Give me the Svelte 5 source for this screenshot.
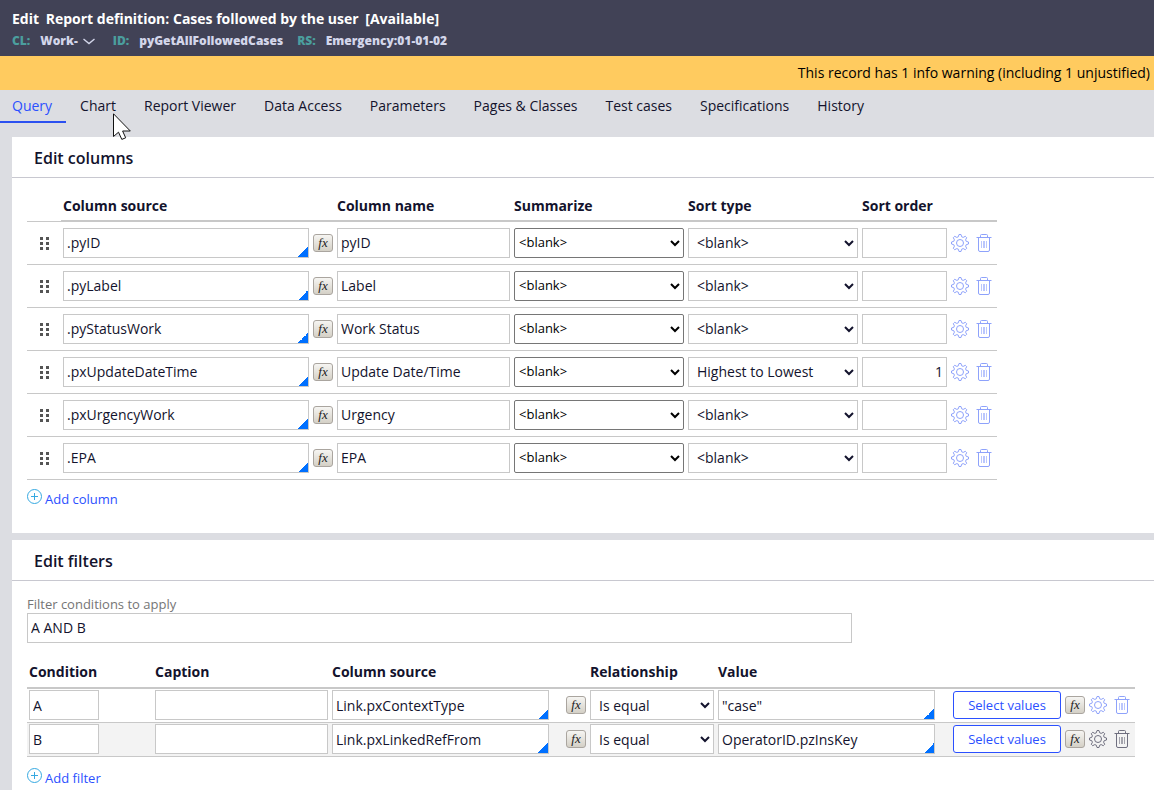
<script>
  const tabs = [
    "Query",
    "Chart",
    "Report Viewer",
    "Data Access",
    "Parameters",
    "Pages & Classes",
    "Test cases",
    "Specifications",
    "History",
  ];

  let activeTab = "Query";

  let columns = [
    { source: ".pyID", name: "pyID", summarize: "", sort: "", order: "" },
    { source: ".pyLabel", name: "Label", summarize: "", sort: "", order: "" },
    { source: ".pyStatusWork", name: "Work Status", summarize: "", sort: "", order: "" },
    { source: ".pxUpdateDateTime", name: "Update Date/Time", summarize: "", sort: "desc", order: "1" },
    { source: ".pxUrgencyWork", name: "Urgency", summarize: "", sort: "", order: "" },
    { source: ".EPA", name: "EPA", summarize: "", sort: "", order: "" },
  ];

  let logic = "A AND B";

  let filters = [
    { condition: "A", caption: "", source: "Link.pxContextType", relation: "eq", value: '"case"' },
    { condition: "B", caption: "", source: "Link.pxLinkedRefFrom", relation: "eq", value: "OperatorID.pzInsKey" },
  ];

  function addColumn() {
    columns = [...columns, { source: "", name: "", summarize: "", sort: "", order: "" }];
  }

  function removeColumn(i) {
    columns = columns.filter((_, n) => n !== i);
  }

  function addFilter() {
    const condition = String.fromCharCode(65 + filters.length);
    filters = [...filters, { condition, caption: "", source: "", relation: "eq", value: "" }];
  }

  function removeFilter(i) {
    filters = filters.filter((_, n) => n !== i);
  }
</script>

{#snippet gear()}
  <svg width="18" height="18" viewBox="0 0 18 18" fill="none" stroke="currentColor">
    <path
      d="M7.3 2.8 8 .5h2l.7 2.3 1.5.6 2.1-1.1 1.4 1.4-1.1 2.1.6 1.500 2.300.7v2l-2.300.7-.6 1.500 1.100 2.100-1.400 1.400-2.100-1.100-1.500.6-.7 2.300H8l-.7-2.300-1.500-.6-2.100 1.100-1.400-1.400 1.100-2.100-.6-1.500L.5 10V8l2.300-.7.6-1.500-1.100-2.100 1.400-1.400 2.100 1.100Z"
      stroke-linejoin="round"
    />
    <circle cx="9" cy="9" r="3.5" />
  </svg>
{/snippet}

{#snippet trash()}
  <svg width="16" height="18" viewBox="0 0 16 18" fill="none" stroke="currentColor">
    <path d="M.5 3.5h15M4.5 3V1.5q0-1 1-1h5q1 0 1 1V3" />
    <path d="M2.5 4v12q0 1.5 1.5 1.5h8q1.5 0 1.5-1.5V4" />
    <path d="M5.5 7v7M7.5 7v7M8.5 7v7M10.5 7v7" opacity="0.6" />
  </svg>
{/snippet}

{#snippet plus()}
  <svg width="15" height="15" viewBox="0 0 15 15" fill="none" stroke="#36a9e1">
    <circle cx="7.5" cy="7.5" r="7" />
    <path d="M7.5 4v7M4 7.5h7" />
  </svg>
{/snippet}

<header>
  <h1><span>Edit</span> <span>Report definition: Cases followed by the user</span> [Available]</h1>
  <div class="meta">
    <span class="key">CL:</span>
    <button type="button" class="class-menu">
      Work-
      <svg width="12" height="7" viewBox="0 0 12 7" fill="none" stroke="currentColor" stroke-width="1.4">
        <path d="M.5 1 6 5.5 11.5 1" />
      </svg>
    </button>
    <span class="key">ID:</span>
    <span class="val">pyGetAllFollowedCases</span>
    <span class="key">RS:</span>
    <span class="val">Emergency:01-01-02</span>
  </div>
</header>

<div class="warning">This record has 1 info warning (including 1 unjustified)</div>

<nav>
  {#each tabs as tab}
    <button type="button" class="tab" class:active={tab === activeTab} on:click={() => (activeTab = tab)}>
      {tab}
      {#if tab === "Chart"}
        <svg class="pointer" width="19" height="28" viewBox="0 0 19 28" fill="#fff" stroke="#111" aria-hidden="true">
          <path d="M.5.8V23.5L5.5 19.2 8.8 26.4 12.7 24.8 9.6 18H17.3Z" />
        </svg>
      {/if}
    </button>
  {/each}
</nav>

<main>
  <section>
    <h2>Edit columns</h2>
    <div class="body">
      <table class="columns">
        <colgroup>
          <col class="c-handle" />
          <col class="c-source" />
          <col class="c-name" />
          <col class="c-select" />
          <col class="c-select" />
          <col class="c-order" />
          <col class="c-actions" />
        </colgroup>
        <thead>
          <tr>
            <td></td>
            <th>Column source</th>
            <th>Column name</th>
            <th>Summarize</th>
            <th>Sort type</th>
            <th>Sort order</th>
            <th></th>
          </tr>
        </thead>
        <tbody>
          {#each columns as col, i}
            <tr>
              <td class="handle">
                <svg width="9" height="13" viewBox="0 0 9 13" fill="#555">
                  <path d="M0 0h3v3H0zM6 0h3v3H6zM0 5h3v3H0zM6 5h3v3H6zM0 10h3v3H0zM6 10h3v3H6z" />
                </svg>
              </td>
              <td>
                <div class="cell">
                  <input class="lookup" aria-label="Column source" bind:value={col.source} />
                  <button type="button" class="fx">fx</button>
                </div>
              </td>
              <td><input aria-label="Column name" bind:value={col.name} /></td>
              <td>
                <select class="plain" aria-label="Summarize" bind:value={col.summarize}>
                  <option value="">&lt;blank&gt;</option>
                  <option value="count">Count</option>
                </select>
              </td>
              <td>
                <select aria-label="Sort type" bind:value={col.sort}>
                  <option value="">&lt;blank&gt;</option>
                  <option value="desc">Highest to Lowest</option>
                </select>
              </td>
              <td><input class="order" aria-label="Sort order" bind:value={col.order} /></td>
              <td>
                <div class="actions">
                  <button type="button" class="icon" aria-label="Column options">{@render gear()}</button>
                  <button type="button" class="icon" aria-label="Delete column" on:click={() => removeColumn(i)}>
                    {@render trash()}
                  </button>
                </div>
              </td>
            </tr>
          {/each}
        </tbody>
      </table>
      <button type="button" class="add" on:click={addColumn}>{@render plus()}<span>Add column</span></button>
    </div>
  </section>

  <section>
    <h2>Edit filters</h2>
    <div class="body">
      <label for="logic">Filter conditions to apply</label>
      <input id="logic" class="logic" bind:value={logic} />

      <table class="filters">
        <colgroup>
          <col class="f-condition" />
          <col class="f-caption" />
          <col class="f-source" />
          <col class="f-relation" />
          <col class="f-value" />
          <col class="f-actions" />
        </colgroup>
        <thead>
          <tr>
            <th>Condition</th>
            <th>Caption</th>
            <th>Column source</th>
            <th>Relationship</th>
            <th>Value</th>
            <th></th>
          </tr>
        </thead>
        <tbody>
          {#each filters as filter, i}
            <tr>
              <td><input class="condition" aria-label="Condition" bind:value={filter.condition} /></td>
              <td><input aria-label="Caption" bind:value={filter.caption} /></td>
              <td>
                <div class="cell spread">
                  <input class="lookup" aria-label="Column source" bind:value={filter.source} />
                  <button type="button" class="fx">fx</button>
                </div>
              </td>
              <td>
                <select aria-label="Relationship" bind:value={filter.relation}>
                  <option value="eq">Is equal</option>
                  <option value="ne">Is not equal</option>
                </select>
              </td>
              <td class="value"><input class="lookup" aria-label="Value" bind:value={filter.value} /></td>
              <td>
                <div class="cell">
                  <button type="button" class="select-values">Select values</button>
                  <button type="button" class="fx">fx</button>
                  <div class="actions">
                    <button type="button" class="icon" aria-label="Filter options">{@render gear()}</button>
                    <button type="button" class="icon" aria-label="Delete filter" on:click={() => removeFilter(i)}>
                      {@render trash()}
                    </button>
                  </div>
                </div>
              </td>
            </tr>
          {/each}
        </tbody>
      </table>
      <button type="button" class="add" on:click={addFilter}>{@render plus()}<span>Add filter</span></button>
    </div>
  </section>
</main>

<style>
  :global(body) {
    margin: 0;
    background: #dcdde2;
    color: #13132d;
    font-family: "Open Sans", sans-serif;
    font-size: 14px;
    overflow: hidden;
  }

  button,
  input,
  select {
    box-sizing: border-box;
    margin: 0;
    color: inherit;
    font-family: inherit;
    font-size: 14px;
  }

  button {
    padding: 0;
    border: none;
    background: none;
    cursor: pointer;
  }

  svg {
    display: block;
    flex: none;
  }

  header {
    box-sizing: border-box;
    height: 56px;
    padding: 9px 12px 0;
    background: #414256;
    color: #fff;
  }

  h1 {
    margin: 0;
    font-size: 14px;
    line-height: 20px;
    font-weight: 700;
  }

  h1 span {
    margin-right: 3px;
  }

  .meta {
    display: flex;
    align-items: center;
    margin-top: 2px;
    font-size: 12px;
    line-height: 20px;
    font-weight: 800;
    color: #d3d6ea;
  }

  .key {
    margin-right: 10px;
    color: #4b9e9e;
  }

  .val {
    margin-right: 14px;
  }

  .class-menu {
    display: flex;
    align-items: center;
    gap: 5px;
    margin-right: 18px;
    font-size: 12px;
    line-height: 20px;
    font-weight: 800;
  }

  .warning {
    padding: 0 4px;
    background: #ffcb5f;
    color: #000;
    line-height: 34px;
    text-align: right;
  }

  nav {
    display: flex;
  }

  .tab {
    position: relative;
    height: 33px;
    padding: 0 14px;
    border-bottom: 2px solid transparent;
    line-height: 31px;
  }

  .tab:first-child {
    padding-left: 12px;
  }

  .tab.active {
    border-color: #2b50f0;
    color: #2b50ff;
  }

  .pointer {
    position: absolute;
    top: 23px;
    left: 47px;
    z-index: 1;
  }

  main {
    display: flex;
    flex-direction: column;
    gap: 7px;
    padding: 14px 0 0 12px;
  }

  section {
    background: #fff;
  }

  h2 {
    box-sizing: border-box;
    height: 41px;
    margin: 0;
    padding-left: 22px;
    border-bottom: 1px solid #c8c8d0;
    font-size: 16px;
    line-height: 42px;
    font-weight: 600;
  }

  .body {
    padding: 12px 19px 24px 15px;
  }

  table {
    width: 100%;
    table-layout: fixed;
    border-collapse: separate;
    border-spacing: 0;
  }

  .columns {
    max-width: 970px;
  }

  .filters {
    max-width: 1108px;
    margin-top: 14px;
  }

  .c-handle {
    width: 34px;
  }

  .c-source {
    width: 274px;
  }

  .c-name,
  .f-caption {
    width: 177px;
  }

  .c-select {
    width: 174px;
  }

  .c-order {
    width: 89px;
  }

  .c-actions {
    width: 48px;
  }

  .f-condition {
    width: 126px;
  }

  .f-source {
    width: 258px;
  }

  .f-relation {
    width: 128px;
  }

  .f-value {
    width: 235px;
  }

  .f-actions {
    width: 184px;
  }

  th {
    height: 30px;
    padding: 0 2px;
    border-bottom: 2px solid #c8c8c8;
    line-height: 30px;
    font-weight: 700;
    text-align: left;
  }

  .columns th {
    height: 28px;
    padding-top: 2px;
    line-height: 28px;
  }

  td {
    padding: 6px 2px;
    border-bottom: 1px solid #c8c8c8;
    vertical-align: middle;
  }

  .filters td {
    padding: 1px 2px 2px;
  }

  .filters tbody tr:nth-child(even) {
    background: #f3f3f3;
    --icon-color: #6f6f7f;
  }

  .handle svg {
    margin-left: 11px;
  }

  input,
  select {
    display: block;
    width: 100%;
    height: 30px;
    border: 1px solid #c8c8c8;
    border-radius: 0;
    background: #fff;
  }

  input {
    padding: 0 3px;
  }

  select {
    padding: 0 0 0 4px;
  }

  .columns input,
  .columns select,
  .logic {
    padding-bottom: 2px;
  }

  select.plain {
    padding-left: 0;
    border-color: #767676;
    border-radius: 2px;
    color: #000;
    font-size: 13px;
  }

  .lookup {
    background: linear-gradient(135deg, transparent 50%, #0070ff 50%) right bottom / 10px 10px no-repeat #fff;
  }

  .order {
    text-align: right;
  }

  .condition {
    width: 70px;
  }

  .filters .value {
    padding-right: 16px;
  }

  .cell {
    display: flex;
    align-items: center;
    gap: 4px;
  }

  .spread {
    gap: 17px;
  }

  .fx {
    flex: none;
    width: 20px;
    height: 18px;
    border: 1px solid #aaa59f;
    border-radius: 3px;
    background: linear-gradient(#f6f5f2, #d4d0c6);
    color: #222;
    font-family: "Liberation Serif", serif;
    font-size: 13px;
    line-height: 14px;
    font-style: italic;
  }

  .actions {
    display: flex;
    align-items: center;
    gap: 7px;
  }

  .icon {
    color: var(--icon-color, #8ea2fb);
  }

  .select-values {
    flex: none;
    width: 108px;
    height: 28px;
    border: 1px solid #2b50ff;
    border-radius: 3px;
    background: #fff;
    color: #2b50ff;
    font-size: 13px;
  }

  .add {
    display: flex;
    margin-top: 9px;
    color: #2b50ff;
    font-size: 13px;
    line-height: 20px;
    gap: 3px;
  }

  .filters + .add {
    margin-top: 11px;
  }

  label {
    display: block;
    margin-top: 2px;
    color: #757575;
    font-size: 13px;
    line-height: 18px;
  }

  .logic {
    max-width: 825px;
  }
</style>
